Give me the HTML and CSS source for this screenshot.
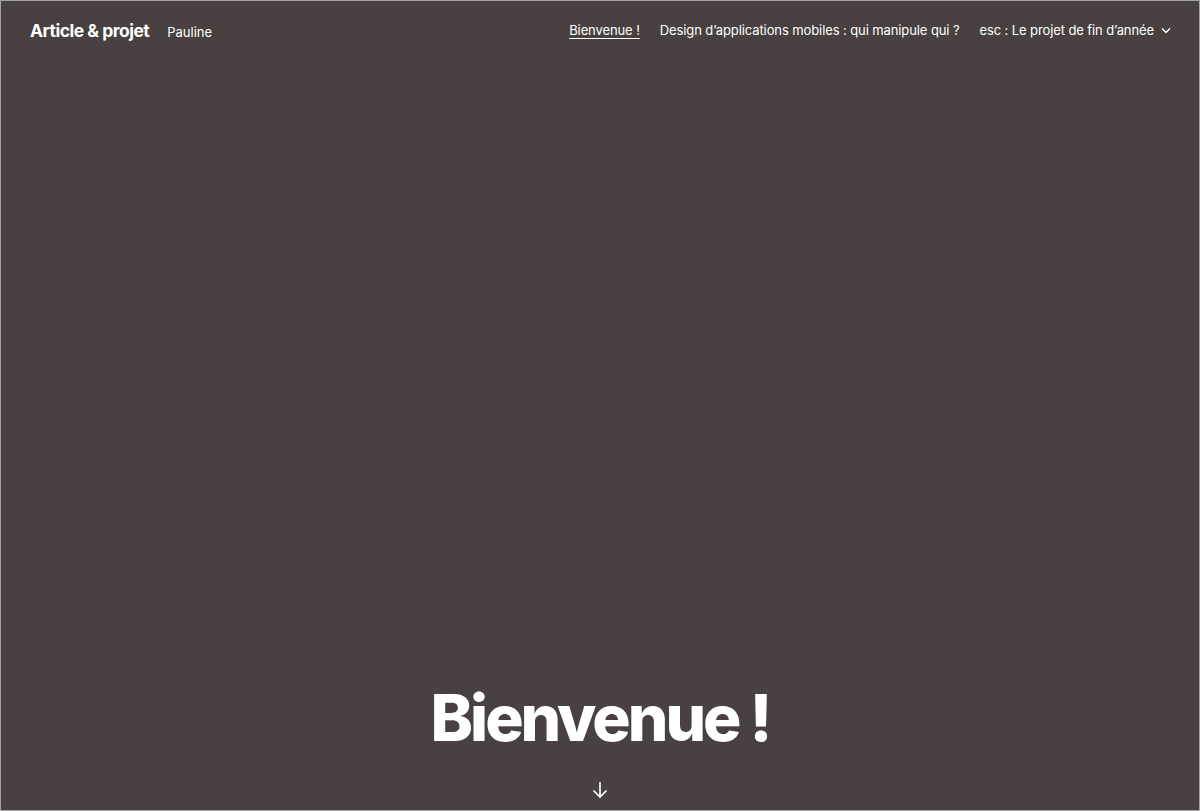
FILE: index.html
```html
<!DOCTYPE html>
<html lang="fr">
<head>
<meta charset="utf-8">
<title>Article &amp; projet</title>
<link rel="stylesheet" href="styles.css">
</head>
<body>
<div class="frame">
  <header class="top">
    <div class="brand">
      <span class="site-title">Article &amp; projet</span>
      <span class="site-desc">Pauline</span>
    </div>
    <nav class="menu">
      <a class="menu-item current" href="#">Bienvenue !</a>
      <a class="menu-item" href="#">Design d’applications mobiles : qui manipule qui ?</a>
      <a class="menu-item" href="#">esc : Le projet de fin d’année
        <svg class="chev" width="10" height="7" viewBox="0 0 10 7"><path d="M1 1.5 L5 5.5 L9 1.5" fill="none" stroke="#fff" stroke-width="1.4"/></svg>
      </a>
    </nav>
  </header>
  <main class="hero">
    <h1 class="hero-title">Bienvenue !</h1>
    <svg class="arrow" width="18" height="20" viewBox="0 0 18 20"><path d="M9 2 V17 M2.5 10.5 L9 17 L15.5 10.5" fill="none" stroke="#fff" stroke-width="1.6"/></svg>
  </main>
</div>
</body>
</html>
```
FILE: styles.css
```css
html, body { margin: 0; padding: 0; }
body {
  font-family: Inter, "Noto Sans", sans-serif;
  color: #fff;
  background: #fff;
}
.frame {
  box-sizing: border-box;
  height: 811px;
  border: 1px solid #a3a3a3;
  background: #484041;
  display: flex;
  flex-direction: column;
}
.top {
  display: flex;
  justify-content: space-between;
  align-items: center;
  padding: 16px 28px 0 29px;
  height: 26px;
}
.brand { display: flex; align-items: baseline; gap: 18px; }
.site-title { font-weight: 700; font-size: 17.5px; letter-spacing: -0.5px; }
.site-desc { font-size: 13px; }
.menu { display: flex; align-items: center; gap: 20px; }
.menu-item { color: #fff; text-decoration: none; font-size: 13px; letter-spacing: -0.1px; display: flex; align-items: center; gap: 7px; }
.menu-item.current { text-decoration: underline; text-underline-offset: 3px; }
.hero {
  flex: 1;
  display: flex;
  flex-direction: column;
  justify-content: flex-end;
  align-items: center;
  padding-bottom: 10px;
}
.hero-title {
  margin: 0;
  font-size: 64px;
  font-weight: 800;
  letter-spacing: -3px;
  line-height: 1;
}
.arrow { margin-top: 30px; }
```
